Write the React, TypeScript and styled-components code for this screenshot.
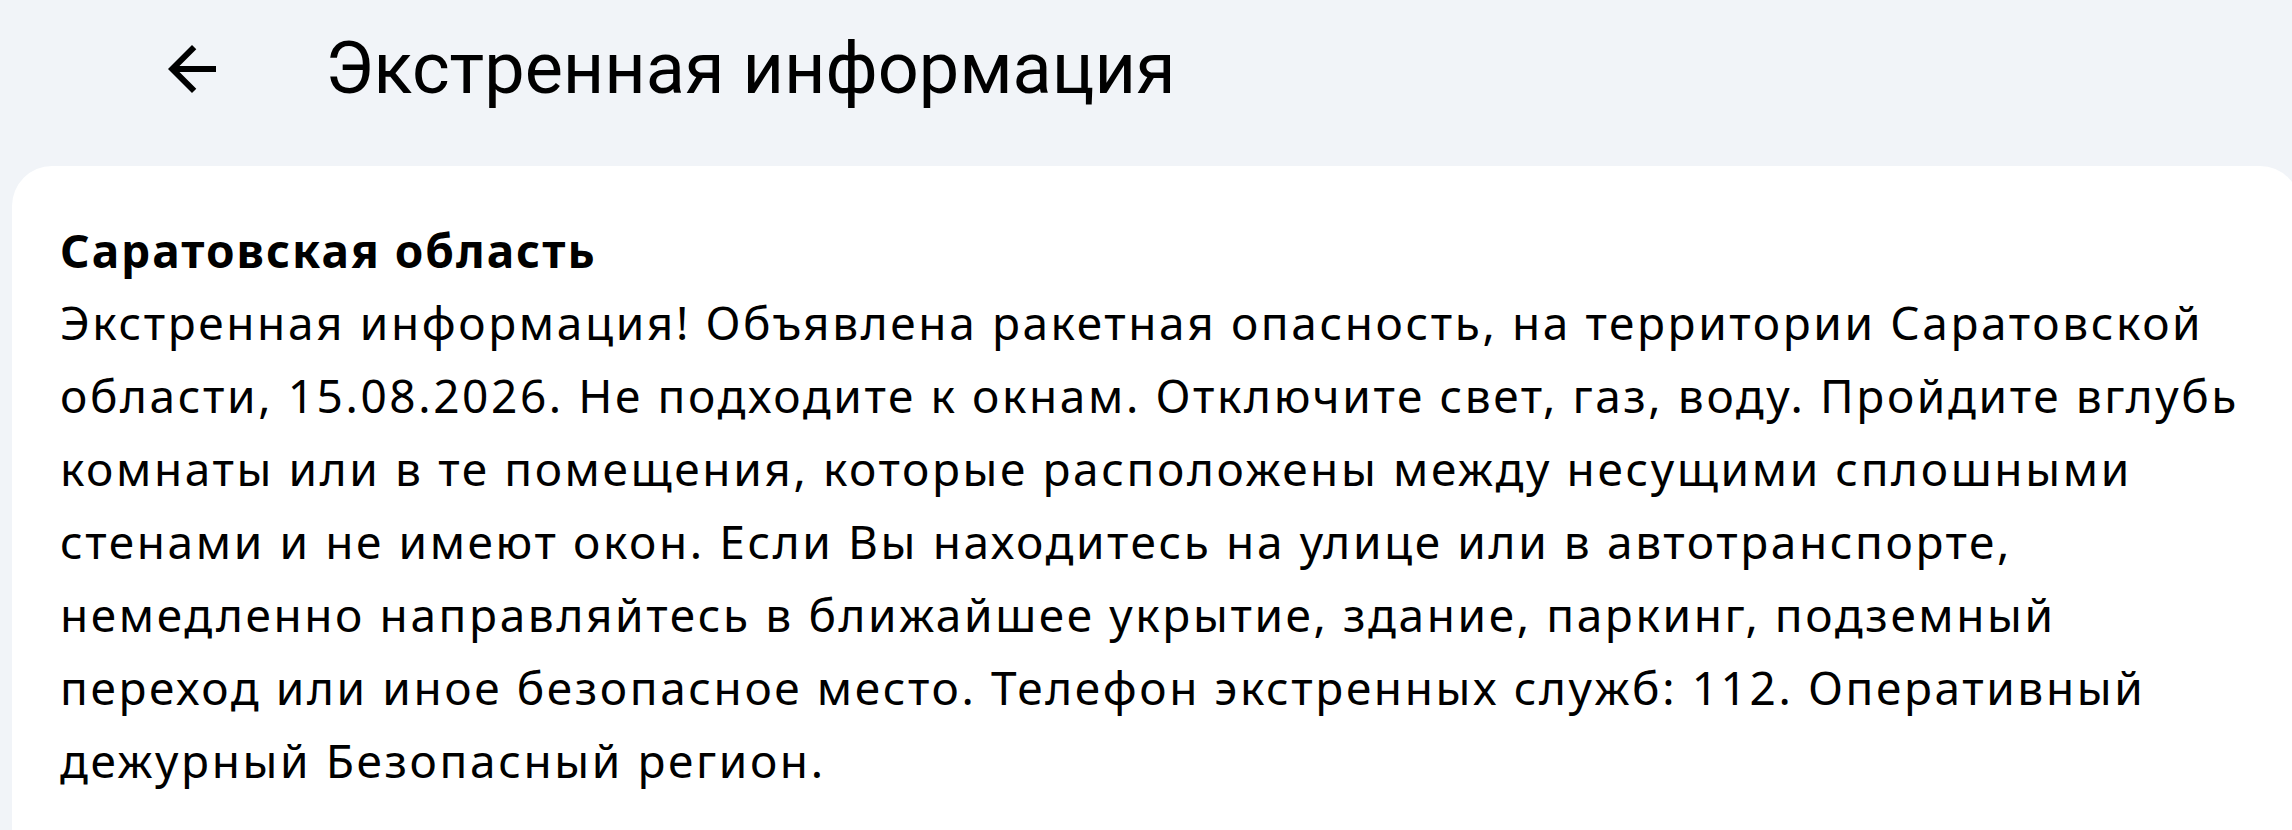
import styled, { createGlobalStyle } from "styled-components"

const GlobalStyle = createGlobalStyle`
    html, body {
        margin: 0;
        padding: 0;
        background: #f1f4f8;
        overflow: hidden;
    }
`

const Page = styled.div`
    width: 2292px;
    height: 830px;
    background: #f1f4f8;
    overflow: hidden;
`

const Header = styled.header`
    height: 138px;
    display: flex;
    align-items: center;
    padding-left: 156px;
`

const BackButton = styled.button`
    width: 72px;
    height: 72px;
    padding: 0;
    border: none;
    background: none;
    display: flex;
    cursor: pointer;
`

const Title = styled.h1`
    margin: 0 0 0 97px;
    font-family: Roboto, "Noto Sans", sans-serif;
    font-weight: 400;
    font-size: 72px;
    line-height: 72px;
    color: #000;
`

const Card = styled.section`
    margin: 28px -8px 0 12px;
    padding: 48px 48px;
    background: #fff;
    border-radius: 40px;
    min-height: 700px;
    color: #000;
    font-family: "Noto Sans", "Open Sans", sans-serif;
`

const Region = styled.h2`
    margin: 0;
    font-size: 46px;
    font-weight: 700;
    line-height: 72px;
    letter-spacing: 2px;
`

const Message = styled.p`
    margin: 0;
    font-size: 46px;
    font-weight: 400;
    line-height: 73px;
    letter-spacing: 2.6px;
`

const ArrowBack = () => (
    <svg width="72" height="72" viewBox="0 -960 960 960" fill="#000">
        <path d="M313-440l224 224-57 56-320-320 320-320 57 56-224 224h487v80H313Z"/>
    </svg>
)

const App = () => {
    return (
        <Page>
            <GlobalStyle/>
            <Header>
                <BackButton aria-label="Назад">
                    <ArrowBack/>
                </BackButton>
                <Title>Экстренная информация</Title>
            </Header>
            <Card>
                <Region>Саратовская область</Region>
                <Message>
                    Экстренная информация! Объявлена ракетная опасность, на территории Саратовской
                    области, 15.08.2026. Не подходите к окнам. Отключите свет, газ, воду. Пройдите вглубь
                    комнаты или в те помещения, которые расположены между несущими сплошными
                    стенами и не имеют окон. Если Вы находитесь на улице или в автотранспорте,
                    немедленно направляйтесь в ближайшее укрытие, здание, паркинг, подземный
                    переход или иное безопасное место. Телефон экстренных служб: 112. Оперативный
                    дежурный Безопасный регион.
                </Message>
            </Card>
        </Page>
    )
}

export default App
